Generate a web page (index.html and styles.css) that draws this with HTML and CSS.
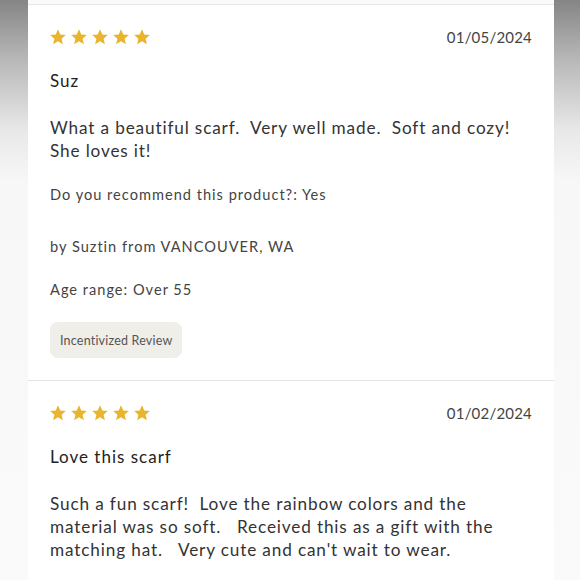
FILE: index.html
```html
<!DOCTYPE html>
<html>
<head>
<meta charset="utf-8">
<link rel="stylesheet" href="styles.css">
</head>
<body>
<div class="page">
  <div class="side side-left"></div>
  <main class="list">
    <article class="review first">
      <div class="head">
        <div class="stars">
          <svg viewBox="0 0 24 24"><path d="M12 1.8l3 6.9 7.4.6-5.6 4.9 1.7 7.3L12 17.6l-6.5 3.9 1.7-7.3L1.6 9.3l7.4-.6z"/></svg>
          <svg viewBox="0 0 24 24"><path d="M12 1.8l3 6.9 7.4.6-5.6 4.9 1.7 7.3L12 17.6l-6.5 3.9 1.7-7.3L1.6 9.3l7.4-.6z"/></svg>
          <svg viewBox="0 0 24 24"><path d="M12 1.8l3 6.9 7.4.6-5.6 4.9 1.7 7.3L12 17.6l-6.5 3.9 1.7-7.3L1.6 9.3l7.4-.6z"/></svg>
          <svg viewBox="0 0 24 24"><path d="M12 1.8l3 6.9 7.4.6-5.6 4.9 1.7 7.3L12 17.6l-6.5 3.9 1.7-7.3L1.6 9.3l7.4-.6z"/></svg>
          <svg viewBox="0 0 24 24"><path d="M12 1.8l3 6.9 7.4.6-5.6 4.9 1.7 7.3L12 17.6l-6.5 3.9 1.7-7.3L1.6 9.3l7.4-.6z"/></svg>
        </div>
        <span class="date">01/05/2024</span>
      </div>
      <h3 class="title">Suz</h3>
      <p class="body">What a beautiful scarf.&nbsp; Very well made.&nbsp; Soft and cozy!<br>She loves it!</p>
      <p class="meta recommend">Do you recommend this product?: Yes</p>
      <p class="meta author">by Suztin from VANCOUVER, WA</p>
      <p class="meta age">Age range: Over 55</p>
      <span class="badge">Incentivized Review</span>
    </article>
    <article class="review">
      <div class="head">
        <div class="stars">
          <svg viewBox="0 0 24 24"><path d="M12 1.8l3 6.9 7.4.6-5.6 4.9 1.7 7.3L12 17.6l-6.5 3.9 1.7-7.3L1.6 9.3l7.4-.6z"/></svg>
          <svg viewBox="0 0 24 24"><path d="M12 1.8l3 6.9 7.4.6-5.6 4.9 1.7 7.3L12 17.6l-6.5 3.9 1.7-7.3L1.6 9.3l7.4-.6z"/></svg>
          <svg viewBox="0 0 24 24"><path d="M12 1.8l3 6.9 7.4.6-5.6 4.9 1.7 7.3L12 17.6l-6.5 3.9 1.7-7.3L1.6 9.3l7.4-.6z"/></svg>
          <svg viewBox="0 0 24 24"><path d="M12 1.8l3 6.9 7.4.6-5.6 4.9 1.7 7.3L12 17.6l-6.5 3.9 1.7-7.3L1.6 9.3l7.4-.6z"/></svg>
          <svg viewBox="0 0 24 24"><path d="M12 1.8l3 6.9 7.4.6-5.6 4.9 1.7 7.3L12 17.6l-6.5 3.9 1.7-7.3L1.6 9.3l7.4-.6z"/></svg>
        </div>
        <span class="date">01/02/2024</span>
      </div>
      <h3 class="title">Love this scarf</h3>
      <p class="body">Such a fun scarf!&nbsp; Love the rainbow colors and the<br>material was so soft. &nbsp; Received this as a gift with the<br>matching hat. &nbsp; Very cute and can't wait to wear.</p>
    </article>
  </main>
  <div class="side side-right"></div>
</div>
</body>
</html>
```

FILE: styles.css
```css
* { box-sizing: border-box; }
html, body { margin: 0; padding: 0; }
body {
  width: 580px;
  height: 580px;
  overflow: hidden;
  background: #fafafa;
  font-family: "Lato", "Noto Sans", sans-serif;
  color: #333;
}
.page {
  display: grid;
  grid-template-columns: 28px 1fr 26px;
  height: 580px;
}
.side {
  background: linear-gradient(to bottom, #858585 0px, #b8b8b8 60px, #e8e8e8 130px, #f7f7f7 180px, #fafafa 580px);
}
.list {
  background: #fff;
  border-top: 1px solid #e6e6e6;
  margin-top: 4px;
  height: 576px;
  overflow: hidden;
}
.review {
  padding: 19px 22px 22px 22px;
  border-bottom: 1px solid #e4e4e4;
}
.head {
  display: flex;
  justify-content: space-between;
  align-items: center;
  height: 26px;
}
.stars { display: flex; gap: 3px; margin-left: -1px; }
.stars svg { width: 18px; height: 18px; fill: #e9b42e; }
.date { font-size: 15px; color: #444; letter-spacing: 0.2px; }
.title {
  margin: 20.5px 0 0;
  font-size: 17px;
  font-weight: 400;
  color: #222;
  line-height: 20px;
  letter-spacing: 1px;
}
.body {
  margin: 25.5px 0 0;
  font-size: 17.2px;
  line-height: 23px;
  color: #333;
  letter-spacing: 0.85px;
}
.meta {
  font-size: 14.6px;
  color: #444;
  line-height: 18px;
  letter-spacing: 1px;
  margin: 0;
}
.recommend { margin-top: 24px; }
.author { margin-top: 34px; }
.age { margin-top: 25px; }
.badge {
  display: inline-block;
  margin-top: 23px;
  background: #efeee9;
  border-radius: 8px;
  padding: 9.5px 10px;
  font-size: 12.5px;
  color: #555;
  line-height: 17px;
  letter-spacing: 0.2px;
}
```
